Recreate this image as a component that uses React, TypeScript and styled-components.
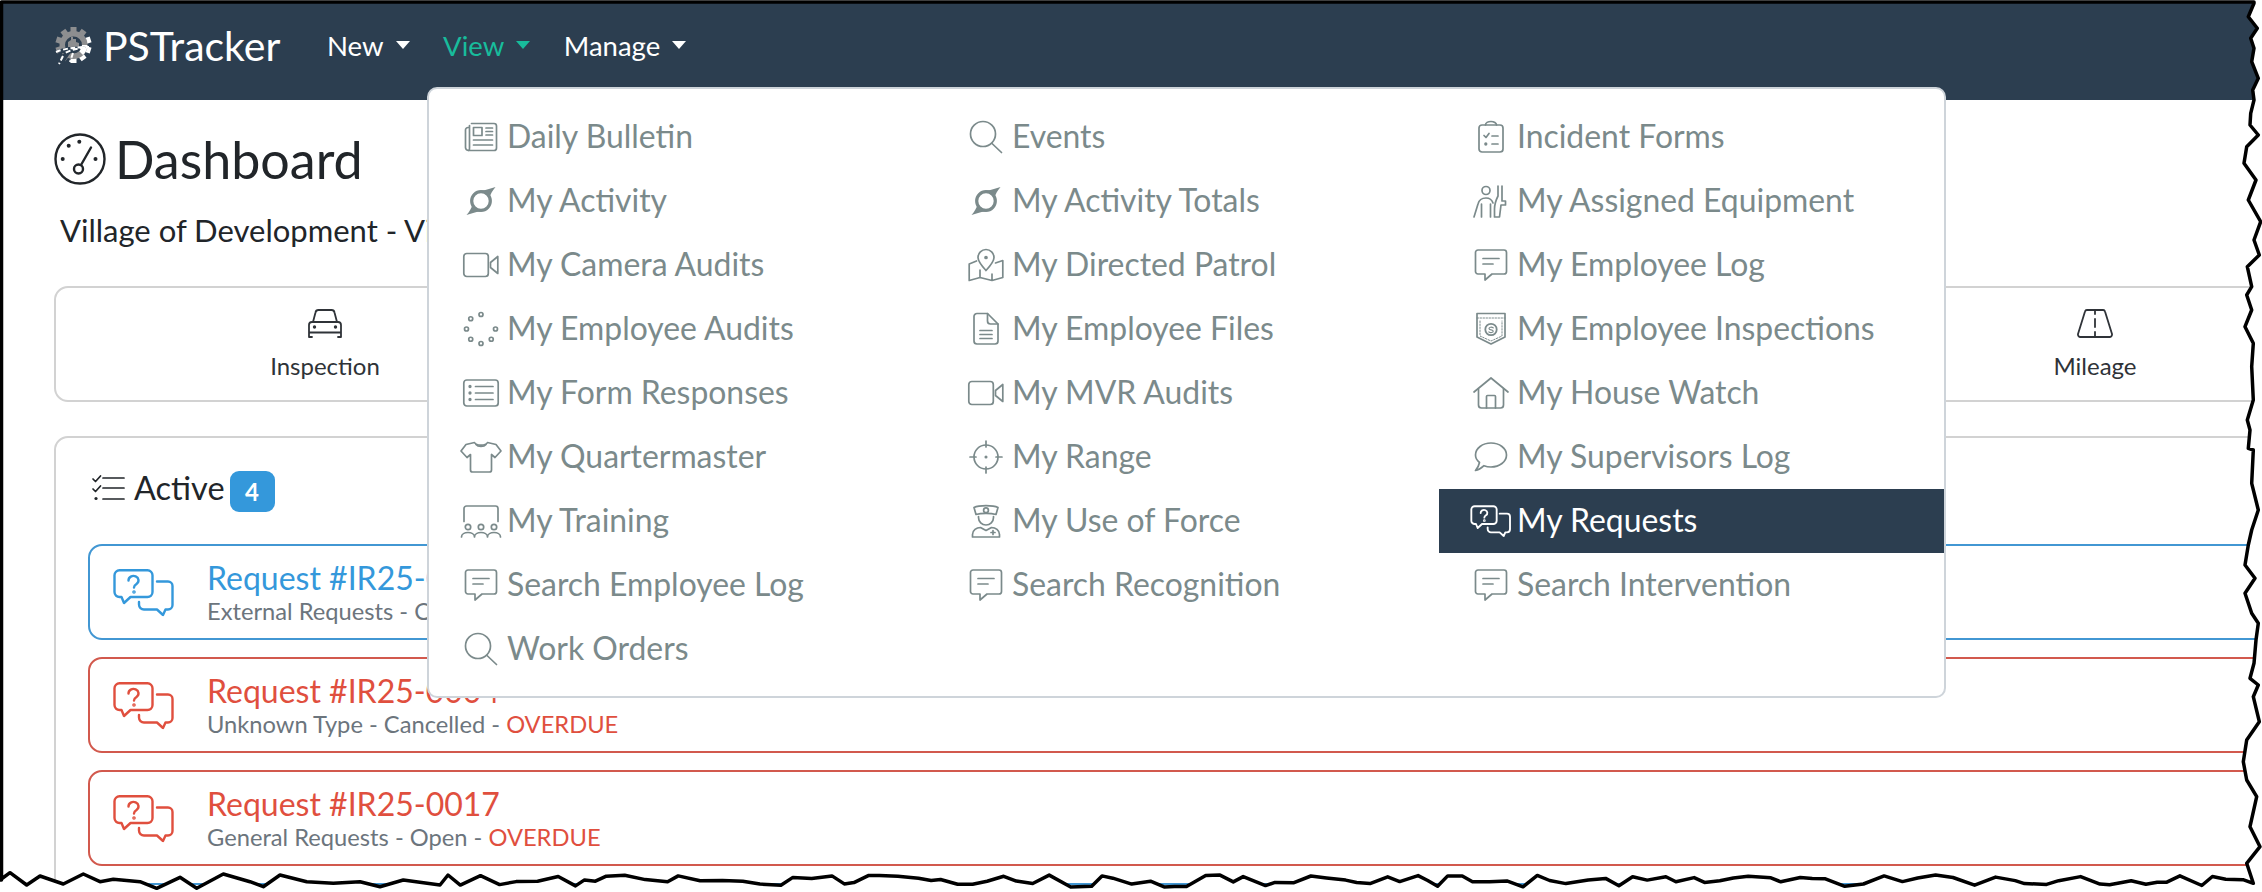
import React from "react";
import styled, { createGlobalStyle } from "styled-components";

const Global = createGlobalStyle`
  html, body { margin: 0; padding: 0; background: #fff; }
  body { font-family: Lato, "Noto Sans", sans-serif; color: #212529; }
  * { box-sizing: border-box; }
`;

const Frame = styled.div`
  position: relative;
  width: 2262px;
  height: 892px;
  overflow: hidden;
  background: #fff;
`;

const Navbar = styled.nav`
  position: relative;
  height: 100px;
  background: #2c3e50;
  display: flex;
  align-items: center;
  padding: 0 0 8px 53px;
`;

const Brand = styled.div`
  display: flex;
  align-items: center;
  gap: 10px;
  width: 274px;
  color: #fff;
  font-size: 41px;
  line-height: 48px;
`;

const NavLink = styled.div<{ $active?: boolean }>`
  display: flex;
  align-items: center;
  gap: 12px;
  margin-right: 33.5px;
  font-size: 27.5px;
  line-height: 36px;
  color: ${(p) => (p.$active ? "#18bc9c" : "#fff")};
  &::after {
    content: "";
    border-top: 8px solid currentColor;
    border-left: 7.5px solid transparent;
    border-right: 7.5px solid transparent;
    margin-top: -3px;
  }
`;

const Menu = styled.div`
  position: absolute;
  z-index: 3;
  left: 427px;
  top: 87px;
  width: 1519px;
  padding: 16px 0 15px;
  background: #fff;
  border: 2px solid #ced4da;
  border-radius: 10px;
  display: grid;
  grid-template-columns: repeat(3, 505px);
  grid-auto-rows: 64px;
`;

const MenuItem = styled.div<{ $active?: boolean }>`
  display: flex;
  align-items: center;
  gap: 8px;
  padding-left: 34px;
  font-size: 31.9px;
  color: ${(p) => (p.$active ? "#fff" : "#7b8a8b")};
  background: ${(p) => (p.$active ? "#2c3e50" : "transparent")};
`;

const MenuLabel = styled.span`
  margin-top: -2px;
`;

const Glyph = styled.svg.attrs({ viewBox: "0 0 36 36", width: 36, height: 36 })`
  flex: none;
  overflow: visible;
  fill: none;
  stroke: currentColor;
  stroke-width: 1.7;
  stroke-linecap: round;
  stroke-linejoin: round;
`;

const Main = styled.main`
  padding-top: 29px;
`;

const TitleRow = styled.div`
  display: flex;
  align-items: center;
  gap: 9px;
  padding-left: 54px;
  height: 60px;
`;

const Title = styled.h1`
  margin: 0;
  font-size: 52px;
  font-weight: 400;
  line-height: 60px;
  color: #212529;
`;

const Subtitle = styled.div`
  margin: 21px 0 36px 60px;
  font-size: 31px;
  line-height: 40px;
  color: #212529;
`;

const TileCard = styled.section`
  width: 2290px;
  height: 116px;
  margin-left: 54px;
  border: 2px solid #d2d2d2;
  border-radius: 14px;
  display: flex;
  justify-content: space-between;
`;

const Tile = styled.div<{ $w: number }>`
  width: ${(p) => p.$w}px;
  display: flex;
  flex-direction: column;
  align-items: center;
  padding-top: 21px;
  gap: 12px;
  font-size: 24px;
  line-height: 32px;
  color: #2f3338;
`;

const ActiveCard = styled.section`
  width: 2290px;
  height: 600px;
  margin: 34px 0 0 54px;
  padding: 33px 0 0 32px;
  border: 2px solid #d2d2d2;
  border-radius: 14px;
`;

const ActiveHeader = styled.div`
  display: flex;
  align-items: center;
  height: 41px;
  padding-left: 4px;
  margin-bottom: 32px;
  font-size: 32.5px;
  color: #212529;
`;

const TasksWrap = styled.span`
  display: flex;
  margin-top: -8px;
`;

const ActiveLabel = styled.span`
  margin: -8px 5px 0 10px;
`;

const Badge = styled.span`
  width: 45px;
  height: 41px;
  border-radius: 9px;
  background: #3498db;
  color: #fff;
  font-size: 24px;
  font-weight: 700;
  display: flex;
  align-items: center;
  justify-content: center;
`;

const RequestCard = styled.div<{ $tone: string; $line: string }>`
  display: flex;
  align-items: center;
  gap: 33px;
  height: 96px;
  margin-bottom: 17px;
  padding-left: 24px;
  border: 2px solid ${(p) => p.$line};
  border-radius: 14px;
  color: ${(p) => p.$tone};
`;

const RequestText = styled.div`
  display: flex;
  flex-direction: column;
`;

const RequestTitle = styled.div`
  font-size: 32px;
  line-height: 38px;
  padding-top: 1px;
`;

const RequestSub = styled.div`
  font-size: 23.7px;
  line-height: 29px;
  color: #6c757d;
`;

const Overdue = styled.span`
  color: #e04f3e;
`;

const Torn = styled.svg`
  position: absolute;
  z-index: 5;
  left: 0;
  top: 0;
  pointer-events: none;
`;

/* ---------- icons (each drawn in a 36-unit box) ---------- */
const Newspaper = () => (
  <Glyph>
    <path d="M8.500 4.500H31a2.500 2.500 0 0 1 2.500 2.500v22a2.500 2.500 0 0 1-2.500 2.500H5.500a3 3 0 0 1-3-3V11a2.500 2.500 0 0 1 2.500-2.500h1.500M6.500 6.500V29a2.500 2.500 0 0 1-1 2.500" />
    <path d="M10.500 8.500h8.500v8h-8.500zM23 9h6.500M23 12.500h6.500M23 16h6.500M10.500 21h19M10.500 26h19" />
  </Glyph>
);
const Hurricane = () => (
  <Glyph>
    <circle cx="18" cy="18" r="9.300" strokeWidth="3.200" />
    <path d="M32.500 4C28 5.200 24 7 18.500 7.500l8 7c1-3.500 3-7 6-10.500zM3.500 32C8 30.800 12 29 17.500 28.500l-8-7c-1 3.500-3 7-6 10.500z" fill="currentColor" stroke="none" />
  </Glyph>
);
const Video = () => (
  <Glyph>
    <rect x="0.800" y="6.500" width="24.500" height="23" rx="3" />
    <path d="M27.500 15.500 34.800 9.500v17l-7.300-6z" />
  </Glyph>
);
const Spinner = () => (
  <Glyph>
    {[0, 45, 90, 135, 180, 225, 270].map((a) => {
      const r = (a * Math.PI) / 180;
      return <circle key={a} cx={18 + 14.5 * Math.cos(r)} cy={18 + 14.5 * Math.sin(r)} r="2" />;
    })}
  </Glyph>
);
const FormList = () => (
  <Glyph>
    <rect x="0.800" y="5" width="34.400" height="26" rx="3" />
    <path d="M12.500 11.500H30M12.500 18H30M12.500 24.500H30" />
    <circle cx="7" cy="11.500" r="0.800" />
    <circle cx="7" cy="18" r="0.800" />
    <circle cx="7" cy="24.500" r="0.800" />
  </Glyph>
);
const Shirt = () => (
  <Glyph>
    <path d="M11.500 3.500C13 7 23 7 24.500 3.500L33 5.500l5 6.500-6 6.500-3.500-3V31a2 2 0 0 1-2 2H9.500a2 2 0 0 1-2-2V15.500l-3.500 3-6-6.500 5-6.500z" />
    <path d="M13 5.500c2 2.500 8 2.500 10 0" />
  </Glyph>
);
const Training = () => (
  <Glyph>
    <path d="M1 18.500V5.500A2.500 2.500 0 0 1 3.500 3h29A2.500 2.500 0 0 1 35 5.500v13" />
    <circle cx="5" cy="24" r="2.700" />
    <circle cx="18" cy="24" r="2.700" />
    <circle cx="31" cy="24" r="2.700" />
    <path d="M-1.500 34c0-6 13-6 13 0M11.500 34c0-6 13-6 13 0M24.500 34c0-6 13-6 13 0" />
  </Glyph>
);
const CommentLines = () => (
  <Glyph>
    <path d="M5 3h26a2.500 2.500 0 0 1 2.500 2.500v19A2.500 2.500 0 0 1 31 27H19l-7 6v-6H5a2.500 2.500 0 0 1-2.500-2.500v-19A2.500 2.500 0 0 1 5 3z" />
    <path d="M10 11.500h16M10 17h10" />
  </Glyph>
);
const Search = () => (
  <Glyph>
    <circle cx="15" cy="15" r="12.500" />
    <path d="M24 24.500 33.500 33.500" />
  </Glyph>
);
const MapPin = () => (
  <Glyph>
    <path d="M18 2.500a8 8 0 0 1 8 8c0 4-4.800 9.500-8 13-3.200-3.500-8-9-8-13a8 8 0 0 1 8-8z" />
    <circle cx="18" cy="10.500" r="1" fill="currentColor" />
    <path d="M8.500 14 1.200 17v16.500l10.800-3 12 3 10.800-3V13.500L27.500 16M12 23v7.500M24 27v6.500" />
  </Glyph>
);
const FileLines = () => (
  <Glyph>
    <path d="M19.500 2.500H9a3 3 0 0 0-3 3V30a3 3 0 0 0 3 3h18a3 3 0 0 0 3-3V13z" />
    <path d="M19.500 2.500V10a3 3 0 0 0 3 3H30M12 19.500h12M12 23.500h12M12 27.500h12" />
  </Glyph>
);
const Crosshair = () => (
  <Glyph>
    <circle cx="18" cy="18" r="12" />
    <path d="M18 2v6M18 28v6M2 18h6M28 18h6" />
    <circle cx="18" cy="18" r="0.700" fill="currentColor" />
  </Glyph>
);
const Officer = () => (
  <Glyph>
    <path d="M6 4.500C11 2 25 2 30 4.500L28 11.500c-5-1.500-15-1.500-20 0z" />
    <circle cx="18" cy="7.200" r="2.400" />
    <path d="M10.500 13.500v1a7.500 7.500 0 0 0 15 0v-1" />
    <path d="M4.500 34v-2.500c0-4.500 4-7 8-7l5.500 3 5.500-3c4 0 8 2.500 8 7V34z" />
    <path d="M25 27.500v4M23 29.500h4" />
  </Glyph>
);
const Clipboard = () => (
  <Glyph>
    <rect x="6" y="6" width="24" height="27" rx="3" />
    <path d="M12.500 6a5.500 3.500 0 0 1 11 0M11 16.500l2 2 3-4M19 17h6M19 25h6" />
    <circle cx="12.800" cy="25" r="0.800" fill="currentColor" />
  </Glyph>
);
const PersonRifle = () => (
  <Glyph>
    <circle cx="13" cy="7.500" r="4" />
    <path d="M1 34l4-13c1-4 4-6 8-6s6 2 7 5M8.500 34V21M17.500 34V21" />
    <path d="M25 3v10c-2 4-3.500 8-3.500 13v8h5l1.500-12h4.500M29 3v15h3.500v4" />
  </Glyph>
);
const Pocket = () => (
  <Glyph>
    <path d="M4 2.500h28V26l-14 7-14-7z" />
    <path d="M4 7h28M7 10v15l11 5 11-5V10" strokeDasharray="1.500 1.500" strokeWidth="1" />
    <circle cx="18" cy="18.500" r="5.700" strokeWidth="1.800" />
    <path d="M20.200 16.800c-1.500-1-4.200-.8-4.200.8 0 1.800 4.200.8 4.200 2.600 0 1.500-2.800 1.700-4.300.7" strokeWidth="1.200" />
  </Glyph>
);
const House = () => (
  <Glyph>
    <path d="M1 17 18 3l17 14" />
    <path d="M5.500 14v16a3 3 0 0 0 3 3h19a3 3 0 0 0 3-3V14" />
    <path d="M13.500 33V21.500a1 1 0 0 1 1-1h7a1 1 0 0 1 1 1V33" />
  </Glyph>
);
const CommentRound = () => (
  <Glyph>
    <path d="M18 4c8.500 0 15.500 5.300 15.500 12S26.500 28 18 28c-2.500 0-5-.5-7-1.300-2.500 2.300-5.500 4.300-8.500 4.800 2-2.500 3.500-5 4-8C4 21.500 2.500 19 2.500 16 2.500 9.300 9.500 4 18 4z" />
  </Glyph>
);

const bubbleOne = "M5.500 1.300h28a5 5 0 0 1 5 5V23a5 5 0 0 1-5 5H16.500L10 34l-2.500-6h-2a5 5 0 0 1-5-5V6.300a5 5 0 0 1 5-5z";
const bubbleTwo = "M43 12.500h11a4.500 4.500 0 0 1 4.500 4.500v19a4.500 4.500 0 0 1-4.500 4.500h-2.500L49 46l-6-5.500H30a5 5 0 0 1-5-5V33";
const bubbleMark = "M14.500 11.500a5 4.500 0 1 1 8 3.500c-2 1.300-2.500 2-2.500 3.500";

const ChatSvg = styled.svg.attrs({ viewBox: "0 0 60 47" })<{ $w: number; $h: number; $sw: number }>`
  flex: none;
  width: ${(p) => p.$w}px;
  height: ${(p) => p.$h}px;
  overflow: visible;
  fill: none;
  stroke: currentColor;
  stroke-width: ${(p) => p.$sw};
  stroke-linecap: round;
  stroke-linejoin: round;
`;

const ChatQuestion = ({ w, h, sw }: { w: number; h: number; sw: number }) => (
  <ChatSvg $w={w} $h={h} $sw={sw}>
    <path d={bubbleOne} />
    <path d={bubbleTwo} />
    <path d={bubbleMark} />
    <circle cx="20" cy="23" r="0.600" fill="currentColor" />
  </ChatSvg>
);

const MenuChat = styled.span`
  display: flex;
  flex: none;
  width: 36px;
  justify-content: center;
`;

const Logo = () => {
  const teeth = Array.from({ length: 10 }, (_, i) => i * 36);
  return (
    <svg width="40" height="38" viewBox="0 0 40 38" style={{ flex: "none" }}>
      {teeth.map((a) => (
        <rect key={a} x="17.500" y="0" width="6" height="8" fill={a > 60 && a < 190 ? "#fff" : "#8d8e90"} transform={`rotate(${a} 20.500 18)`} />
      ))}
      <circle cx="20.500" cy="18" r="14" fill="#8d8e90" />
      <path d="M30 28A14 14 0 0 0 34.500 18L20 18z" fill="#fff" />
      <circle cx="20.500" cy="18" r="8.500" fill="#2c3e50" />
      <path d="M15 20v-5l3-2v-3h2v2h3v3l3 1v4z" fill="#8d8e90" />
      <path d="M2 24C10 20 20 19 36 20c-8 1-16 3-20 8-2 3-4 6-6 10H4c2-4 4-9 7-12-3 0-6 0-9-2z" fill="#2c3e50" />
      <path d="M3 25c8-3.500 20-5 33-5-9 1-18 2.500-24 6M10 29 6 37M20 26l-3 9" stroke="#fff" strokeWidth="2" fill="none" strokeDasharray="5 2.500" />
    </svg>
  );
};

const Gauge = () => (
  <svg width="52" height="52" viewBox="0 0 52 52" fill="none" stroke="#212529" strokeWidth="2.400" strokeLinecap="round" style={{ flex: "none" }}>
    <circle cx="26" cy="26" r="24.500" />
    <circle cx="24.500" cy="36" r="4.500" />
    <path d="M27 32 37 14.500" />
    <g fill="#212529" stroke="none">
      <circle cx="14.700" cy="12.700" r="2" />
      <circle cx="25.300" cy="8.700" r="2" />
      <circle cx="8.700" cy="26" r="2" />
      <circle cx="41.500" cy="26" r="2" />
    </g>
  </svg>
);

const Car = () => (
  <svg width="34" height="29" viewBox="0 0 34 29" fill="none" stroke="#2f3338" strokeWidth="1.800" strokeLinecap="round" strokeLinejoin="round">
    <path d="M5 13 7.500 3.500A3 3 0 0 1 10.500 1h13a3 3 0 0 1 3 2.500L29 13" />
    <path d="M1 28V16a3 3 0 0 1 3-3h26a3 3 0 0 1 3 3v12M1 23.500h32M1 28h3M30 28h3" />
    <circle cx="6.500" cy="18" r="0.800" fill="#2f3338" />
    <circle cx="27.500" cy="18" r="0.800" fill="#2f3338" />
  </svg>
);

const Road = () => (
  <svg width="36" height="29" viewBox="0 0 36 29" fill="none" stroke="#2f3338" strokeWidth="1.800" strokeLinecap="round" strokeLinejoin="round">
    <path d="M10 1h16a2 2 0 0 1 2 1.500L35 25a2.500 2.500 0 0 1-2.500 3h-29A2.500 2.500 0 0 1 1 25L8 2.500A2 2 0 0 1 10 1z" />
    <path d="M18 1v4M18 10v8M18 23v5" />
  </svg>
);

const TasksIcon = () => (
  <svg width="32" height="26" viewBox="0 0 32 26" fill="none" stroke="#212529" strokeWidth="1.700" strokeLinecap="round" strokeLinejoin="round" style={{ flex: "none", overflow: "visible" }}>
    <path d="M1 4l2.500 2.500L8.500 1M1 14l2.500 2.500L8.500 11M11 3h21M11 13h21M11 24h21" />
    <circle cx="4" cy="23.500" r="1.600" fill="#212529" stroke="none" />
  </svg>
);

/* ---------- data ---------- */
const menu: [string, React.FC, boolean?][] = [
  ["Daily Bulletin", Newspaper],
  ["Events", Search],
  ["Incident Forms", Clipboard],
  ["My Activity", Hurricane],
  ["My Activity Totals", Hurricane],
  ["My Assigned Equipment", PersonRifle],
  ["My Camera Audits", Video],
  ["My Directed Patrol", MapPin],
  ["My Employee Log", CommentLines],
  ["My Employee Audits", Spinner],
  ["My Employee Files", FileLines],
  ["My Employee Inspections", Pocket],
  ["My Form Responses", FormList],
  ["My MVR Audits", Video],
  ["My House Watch", House],
  ["My Quartermaster", Shirt],
  ["My Range", Crosshair],
  ["My Supervisors Log", CommentRound],
  ["My Training", Training],
  ["My Use of Force", Officer],
  ["My Requests", () => (
    <MenuChat>
      <ChatQuestion w={40} h={32} sw={2.8} />
    </MenuChat>
  ), true],
  ["Search Employee Log", CommentLines],
  ["Search Recognition", CommentLines],
  ["Search Intervention", CommentLines],
  ["Work Orders", Search],
];

const BLUE = "#3498db";
const RED = "#e04f3e";

const requests = [
  { title: "Request #IR25-0021", sub: "External Requests - Open", overdue: false, tone: BLUE, line: "#4297d3" },
  { title: "Request #IR25-0004", sub: "Unknown Type - Cancelled - ", overdue: true, tone: RED, line: "#d2594d" },
  { title: "Request #IR25-0017", sub: "General Requests - Open - ", overdue: true, tone: RED, line: "#d2594d" },
];

/* ---------- the torn-paper edge of the screenshot ---------- */
const right9 = [[1062,10],[1045,50],[1072,85],[1052,115],[1062,145],[1055,185],[1075,235],[1058,270],[1062,300],[1052,340],[1050,375],[1075,405],[1040,440],[1032,490],[1068,540],[1045,600],[1082,665],[1062,720],[1078,765],[1042,800],[1055,860],[1040,885],[1055,930],[1035,980],[1060,1030],[1055,1100],[1060,1200],[1042,1260],[1050,1290],[1045,1345]];
const right10 = [[1060,0],[1055,100],[1075,180],[1055,240],[1045,285],[1035,345],[1065,385],[1035,430],[1055,490],[1075,520],[1068,570],[1062,640],[1050,685],[1075,705],[1060,740],[1078,815],[1040,870],[1030,935],[1040,990],[1070,1040],[1050,1130],[1080,1190],[1040,1240],[1060,1300]];
const bottomLeft = [[0,1380],[30,1358],[80,1395],[120,1368],[190,1392],[250,1362],[300,1385],[340,1378],[420,1385],[470,1405],[540,1372],[590,1405],[670,1362],[750,1385],[790,1400],[840,1365],[920,1385],[1000,1390],[1080,1385],[1140,1400],[1210,1380],[1320,1395]];

const tornPoints = (() => {
  const pts: [number, number][] = [[1.5, 2], [2254, 2]];
  right9.forEach(([x, y]) => pts.push([1900 + x / 3, y / 3]));
  right10.forEach(([x, y]) => pts.push([1900 + x / 3, 450 + y / 3]));
  let seed = 17;
  const rnd = () => {
    seed = (seed * 16807) % 2147483647;
    return seed / 2147483647;
  };
  const lower: [number, number][] = [];
  for (let x = 448; x < 2250; x += 9 + rnd() * 14) lower.push([x, 875 + rnd() * 12]);
  lower.reverse().forEach((p) => pts.push(p));
  [...bottomLeft].reverse().forEach(([x, y]) => pts.push([x / 3, 420 + y / 3]));
  pts.push([1.5, 880]);
  return pts;
})();
const tornLine = "M" + tornPoints.map(([x, y]) => `${x.toFixed(1)} ${y.toFixed(1)}`).join("L") + "Z";

export default function App() {
  return (
    <>
      <Global />
      <Frame>
        <Navbar>
          <Brand>
            <Logo />
            PSTracker
          </Brand>
          <NavLink>New</NavLink>
          <NavLink $active>View</NavLink>
          <NavLink>Manage</NavLink>
          <Menu>
            {menu.map(([label, Icon, active]) => (
              <MenuItem key={label} $active={active}>
                <Icon />
                <MenuLabel>{label}</MenuLabel>
              </MenuItem>
            ))}
          </Menu>
        </Navbar>
        <Main>
          <TitleRow>
            <Gauge />
            <Title>Dashboard</Title>
          </TitleRow>
          <Subtitle>Village of Development - Village Hall</Subtitle>
          <TileCard>
            <Tile $w={538}>
              <Car />
              Inspection
            </Tile>
            <Tile $w={494}>
              <Road />
              Mileage
            </Tile>
          </TileCard>
          <ActiveCard>
            <ActiveHeader>
              <TasksWrap>
                <TasksIcon />
              </TasksWrap>
              <ActiveLabel>Active</ActiveLabel>
              <Badge>4</Badge>
            </ActiveHeader>
            {requests.map((r) => (
              <RequestCard key={r.title} $tone={r.tone} $line={r.line}>
                <ChatQuestion w={60} h={47} sw={2.4} />
                <RequestText>
                  <RequestTitle>{r.title}</RequestTitle>
                  <RequestSub>
                    {r.sub}
                    {r.overdue && <Overdue>OVERDUE</Overdue>}
                  </RequestSub>
                </RequestText>
              </RequestCard>
            ))}
            <RequestCard $tone={BLUE} $line="#4297d3" />
          </ActiveCard>
        </Main>
        <Torn width="2262" height="892" viewBox="0 0 2262 892">
          <path d={`M0 0H2262V892H0Z${tornLine}`} fill="#fff" fillRule="evenodd" />
          <path d={tornLine} fill="none" stroke="#000" strokeWidth="3.500" strokeLinejoin="round" />
        </Torn>
      </Frame>
    </>
  );
}
